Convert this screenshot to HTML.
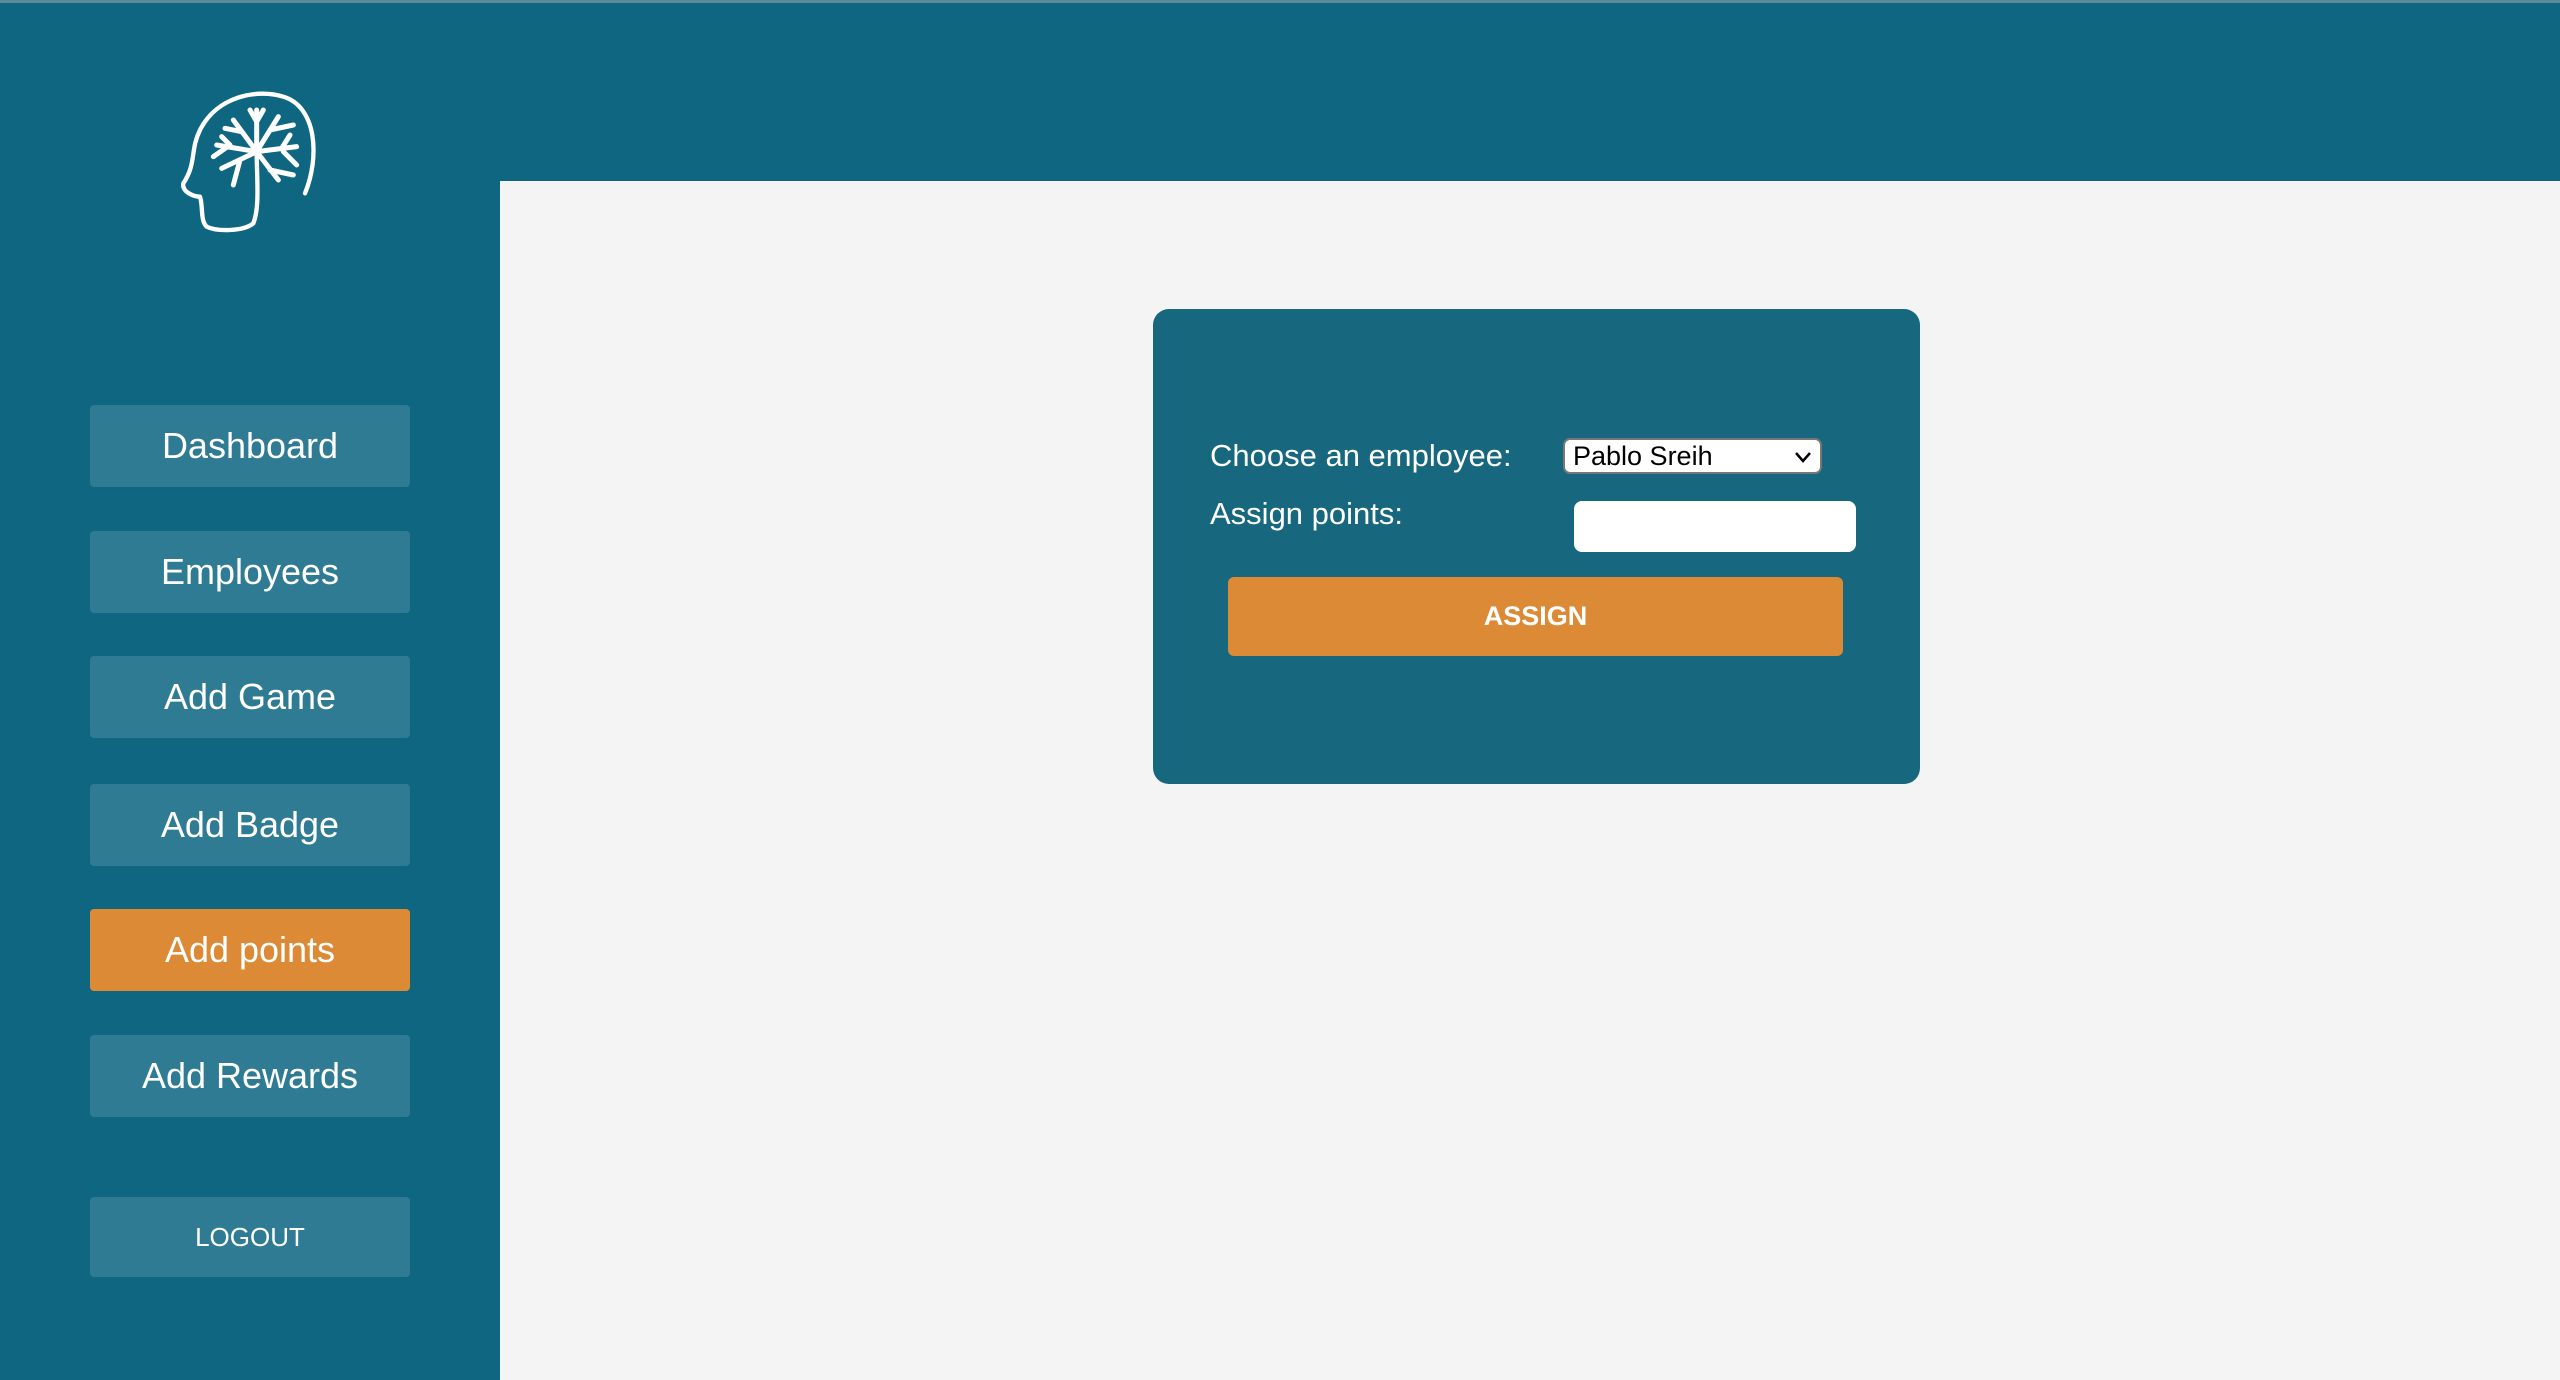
<!DOCTYPE html>
<html><head><meta charset="utf-8"><style>
*{margin:0;padding:0;box-sizing:border-box}
body{width:2560px;height:1380px;background:#f4f4f4;font-family:"Liberation Sans",sans-serif;position:relative;overflow:hidden}
.top{position:absolute;left:0;top:0;width:2560px;height:181px;background:#0f6680}
.line{position:absolute;left:0;top:0;width:2560px;height:3px;background:#5d8a99;z-index:5}
.side{position:absolute;left:0;top:0;width:500px;height:1380px;background:#0f6680}
.nav{position:absolute;left:90px;width:320px;height:82px;background:#2f7b93;border-radius:4px;color:#fff;font-size:36px;display:flex;align-items:center;justify-content:center}
.nav.on{background:#dc8a35}
.card{position:absolute;left:1153px;top:309px;width:767px;height:475px;background:#17677f;border-radius:16px}
.lbl{position:absolute;color:#fff;font-size:31px}
.sel{position:absolute;left:1563px;top:438px;width:259px;height:36px;background:#fff;border:2px solid #777;border-radius:7px;font-size:27px;color:#000;padding-left:8px;line-height:32px}
.inp{position:absolute;left:1574px;top:501px;width:282px;height:51px;background:#fff;border-radius:8px}
.btn{position:absolute;left:1228px;top:577px;width:615px;height:79px;background:#dc8a35;border-radius:6px;color:#fff;font-weight:bold;font-size:27px;display:flex;align-items:center;justify-content:center}
</style></head><body>
<div class="top"></div>
<div class="line"></div>
<div class="side">
<svg style="position:absolute;left:150px;top:60px" width="200" height="190" viewBox="0 0 600 570" fill="none" stroke="#fff" stroke-width="13" stroke-linecap="round" stroke-linejoin="round">
<path d="M465 400 C510 290 500 140 400 110 C320 85 200 110 150 210 C120 270 140 310 100 370 C95 395 130 410 150 410 C160 440 150 480 170 500 C200 515 280 515 310 490 C330 440 320 350 320 275"/>
<path stroke-width="15" d="M320 275 L320 150 M320 185 L300 150 M320 185 L340 150 M320 275 L250 180 M275 215 L225 205 M320 275 L200 255 M240 255 L215 230 M240 255 L190 290 M320 275 L215 325 M270 300 L250 375 M320 275 L385 170 M360 210 L430 195 M320 275 L440 260 M395 265 L420 225 M400 275 L440 315 M320 275 L385 360 M360 330 L430 345"/>
</svg>
<div class="nav" style="top:405px">Dashboard</div>
<div class="nav" style="top:531px">Employees</div>
<div class="nav" style="top:656px">Add Game</div>
<div class="nav" style="top:784px">Add Badge</div>
<div class="nav on" style="top:909px">Add points</div>
<div class="nav" style="top:1035px">Add Rewards</div>
<div class="nav" style="top:1197px;height:80px;font-size:26px">LOGOUT</div>
</div>
<div class="card"></div>
<div class="lbl" style="left:1210px;top:438px">Choose an employee:</div>
<div class="sel">Pablo Sreih<svg style="position:absolute;right:8px;top:10px" width="18" height="14" viewBox="0 0 18 14"><path d="M2 3 L9 11 L16 3" stroke="#000" stroke-width="2.5" fill="none"/></svg></div>
<div class="lbl" style="left:1210px;top:496px">Assign points:</div>
<div class="inp"></div>
<div class="btn">ASSIGN</div>
</body></html>
